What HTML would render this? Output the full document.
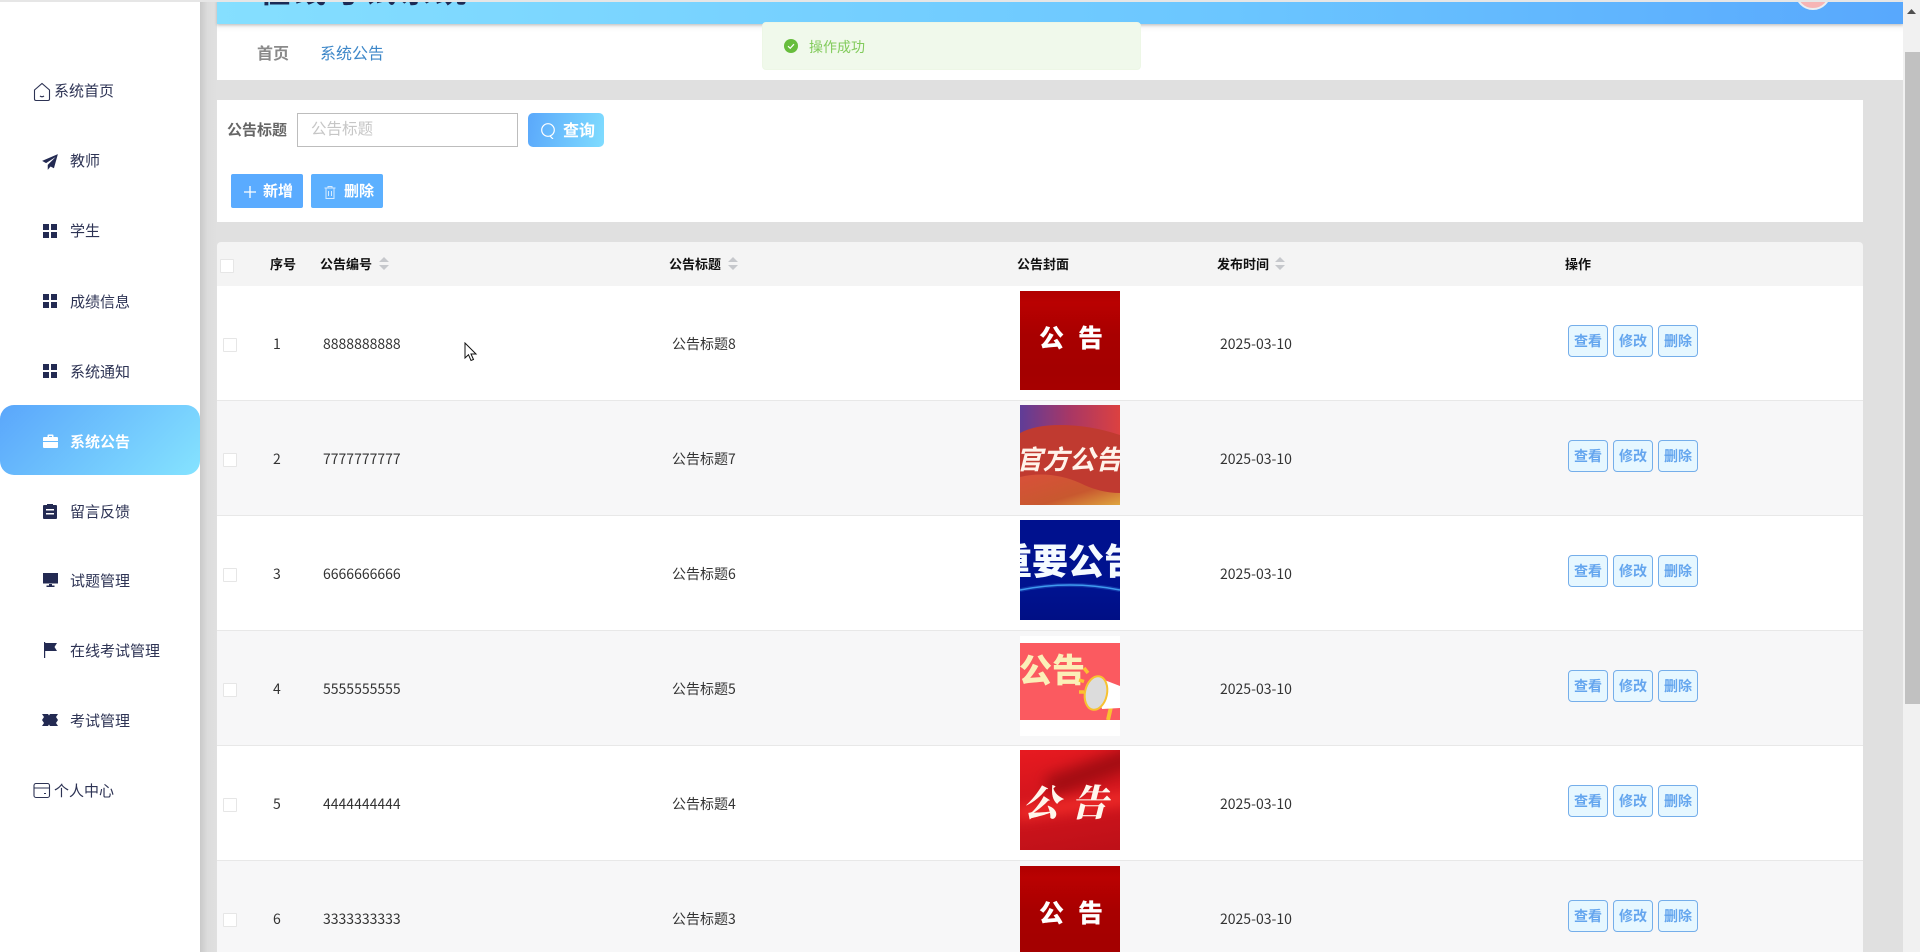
<!DOCTYPE html>
<html lang="zh-CN">
<head>
<meta charset="utf-8">
<title>系统公告</title>
<style>
*{box-sizing:border-box;margin:0;padding:0}
html,body{width:1920px;height:952px;overflow:hidden;background:#fff}
body{font-family:"Liberation Sans","Noto Sans CJK SC",sans-serif;position:relative}
.a{position:absolute;white-space:nowrap}
.cjk{font-family:"Noto Sans CJK SC","Liberation Sans",sans-serif}
.nav{position:absolute;left:70px;font:15px/20px "Noto Sans CJK SC",sans-serif;color:#2d3354;white-space:nowrap}
.ic{position:absolute}
.th{position:absolute;top:255px;font:bold 13px/18px "Noto Sans CJK SC",sans-serif;color:#111;white-space:nowrap}
.td{position:absolute;font:14px/20px "Noto Sans CJK SC",sans-serif;color:#333;white-space:nowrap}
.row{position:absolute;left:217px;width:1646px;height:115px;border-bottom:1px solid #e8e8e8}
.even{background:#f7f7f8}
.cb{position:absolute;left:223px;width:14px;height:14px;background:#fff;border:1px solid #e6e6e6;border-radius:1px}
.op{position:absolute;width:40px;height:32px;border:1px solid #75aeea;border-radius:4px;background:#e6f7ff;color:#64a5ee;font:bold 14px/31px "Noto Sans CJK SC",sans-serif;text-align:center}
.img{position:absolute;left:1020px;width:100px;height:100px;overflow:hidden}
.img span{position:absolute;white-space:nowrap;font-family:"Noto Sans CJK SC",sans-serif;font-weight:900}
.sort{position:absolute;width:10px;height:14px}
</style>
</head>
<body>

<!-- sidebar -->
<div class="a" style="left:0;top:0;width:1903px;height:2px;background:#e6e6e6;z-index:5"></div>
<div class="a" style="left:200px;top:0;width:17px;height:952px;background:linear-gradient(90deg,#c9c9c9,#dcdcdc 45%,#e0e0e0)"></div>
<div class="a" style="left:0;top:405px;width:200px;height:70px;border-radius:14px;background:linear-gradient(135deg,#5aa6fb,#85e3ff)"></div>

<svg class="ic" style="left:33px;top:82px" width="18" height="20" viewBox="0 0 18 20" fill="none" stroke="#2d3354" stroke-width="1.1"><path d="M1.5 8 9 1.5 16.5 8v9a1.5 1.5 0 0 1-1.500 1.500h-12A1.500 1.500 0 0 1 1.500 17z"/><path d="M7 14q2 1.500 4 0"/></svg>
<div class="nav" style="left:54px;top:81px">系统首页</div>

<svg class="ic" style="left:41px;top:153px" width="18" height="18" viewBox="0 0 16 16"><path fill="#232a52" d="M15 1 1 7l3.500 2L13 3.500 6 10.500V15l2.500-3 3 1.500z"/></svg>
<div class="nav" style="top:151px">教师</div>

<svg class="ic" style="left:43px;top:224px" width="14" height="14"><path fill="#232a52" d="M0 0h6v6H0zM8 0h6v6H8zM0 8h6v6H0zM8 8h6v6H8z"/></svg>
<div class="nav" style="top:221px">学生</div>

<svg class="ic" style="left:43px;top:294px" width="14" height="14"><path fill="#232a52" d="M0 0h6v6H0zM8 0h6v6H8zM0 8h6v6H0zM8 8h6v6H8z"/></svg>
<div class="nav" style="top:292px">成绩信息</div>

<svg class="ic" style="left:43px;top:364px" width="14" height="14"><path fill="#232a52" d="M0 0h6v6H0zM8 0h6v6H8zM0 8h6v6H0zM8 8h6v6H8z"/></svg>
<div class="nav" style="top:362px">系统通知</div>

<svg class="ic" style="left:43px;top:434px" width="15" height="14" viewBox="0 0 15 14"><path fill="#fff" d="M4.500 3V1.500A1 1 0 0 1 5.500.5h4a1 1 0 0 1 1 1V3H14a1 1 0 0 1 1 1v3H0V4a1 1 0 0 1 1-1zM6 3h3V2H6zM0 8h15v5a1 1 0 0 1-1 1H1a1 1 0 0 1-1-1z"/></svg>
<div class="nav" style="top:432px;color:#fff;font-weight:700">系统公告</div>

<svg class="ic" style="left:43px;top:503px" width="14" height="16" viewBox="0 0 14 16"><path fill="#232a52" fill-rule="evenodd" d="M4 1h6v1h3a1 1 0 0 1 1 1v12a1 1 0 0 1-1 1H1a1 1 0 0 1-1-1V3a1 1 0 0 1 1-1h3zM3 6v1.500h8V6zM3 10v1.500h8V10z"/></svg>
<div class="nav" style="top:502px">留言反馈</div>

<svg class="ic" style="left:43px;top:573px" width="15" height="14" viewBox="0 0 15 14"><path fill="#232a52" d="M0 0h15v10.500H0zM6 11h3v1.500h2.500V14h-8v-1.500H6z"/></svg>
<div class="nav" style="top:571px">试题管理</div>

<svg class="ic" style="left:44px;top:642px" width="14" height="16" viewBox="0 0 14 16"><path fill="#232a52" d="M0 0h1.200v16H0zM1.200 1H13l-2.500 4L13 9H1.200z"/></svg>
<div class="nav" style="top:641px">在线考试管理</div>

<svg class="ic" style="left:42px;top:714px" width="16" height="12" viewBox="0 0 16 12"><path fill="#232a52" d="M0 0h6l1 1.500L8 0h8l-2 3 2 3-2 3 2 3H8l-1-1.500L6 12H0l2-3L0 6l2-3z"/></svg>
<div class="nav" style="top:711px">考试管理</div>

<svg class="ic" style="left:33px;top:782px" width="18" height="17" viewBox="0 0 18 17" fill="none" stroke="#2d3354" stroke-width="1.100"><rect x="1" y="1.500" width="15.500" height="14" rx="2"/><path d="M1 6h15.500M11 11.500h2"/></svg>
<div class="nav" style="left:54px;top:781px">个人中心</div>

<!-- main background -->
<div class="a" style="left:217px;top:0;width:1686px;height:952px;background:#e0e0e0"></div>

<!-- header -->
<div class="a" style="left:217px;top:24px;width:1686px;height:56px;background:#fff"></div>
<div class="a" style="left:217px;top:24px;width:1686px;height:8px;background:linear-gradient(#ececec,#fbfbfb 60%,#fff)"></div>
<div class="a" style="left:217px;top:0;width:1686px;height:24px;background:linear-gradient(90deg,#85dfff,#6bc6ff 60%,#58a8fd);overflow:hidden;box-shadow:0 1px 3px rgba(0,0,0,.2)">
  <div class="a cjk" style="left:42px;top:-31px;font-size:32px;line-height:40px;font-weight:700;letter-spacing:3.200px;color:#1b2a55">在线考试系统</div>
  <div class="a" style="left:1578px;top:-26px;width:36px;height:36px;border-radius:50%;background:#f6b5b5;border:2px solid #e9eef2"></div>
</div>

<div class="a cjk" style="left:257px;top:41px;font-size:16px;line-height:22px;font-weight:700;color:#8a8a8a">首页</div>
<div class="a cjk" style="left:320px;top:41px;font-size:16px;line-height:22px;color:#3d87c8">系统公告</div>

<!-- search panel -->
<div class="a" style="left:217px;top:100px;width:1646px;height:122px;background:#fff"></div>
<div class="a cjk" style="left:227px;top:120px;font-size:15px;line-height:20px;font-weight:700;color:#666">公告标题</div>
<div class="a" style="left:297px;top:113px;width:221px;height:34px;border:1px solid #bdbdbd;background:#fff"></div>
<div class="a cjk" style="left:311px;top:117px;font-size:15.500px;line-height:22px;color:#c6c6c6">公告标题</div>
<div class="a" style="left:528px;top:113px;width:76px;height:34px;border-radius:5px;background:linear-gradient(100deg,#5aa8fb,#7fdcff)"></div>
<svg class="ic" style="left:540px;top:122px" width="16" height="17" viewBox="0 0 16 17" fill="none" stroke="#fff" stroke-width="1.200"><circle cx="8" cy="8" r="6.300"/><path d="M10 14l3 3"/></svg>
<div class="a cjk" style="left:563px;top:118px;font-size:16px;line-height:22px;font-weight:700;color:#fff">查询</div>

<div class="a" style="left:231px;top:174px;width:72px;height:34px;border-radius:2px;background:#5aabff"></div>
<svg class="ic" style="left:243px;top:185px" width="14" height="14" stroke="#fff" stroke-width="1.300"><path d="M7 1v12M1 7h12"/></svg>
<div class="a cjk" style="left:263px;top:180px;font-size:15px;line-height:22px;font-weight:700;color:#fff">新增</div>
<div class="a" style="left:311px;top:174px;width:72px;height:34px;border-radius:2px;background:#5cb0ff"></div>
<svg class="ic" style="left:323px;top:185px;opacity:.75" width="14" height="15" viewBox="0 0 14 15" fill="none" stroke="#fff" stroke-width="1"><path d="M1.500 3h11M5 3V1.500h4V3M3 3v10.500h8V3M5.500 6v5M8.500 6v5"/></svg>
<div class="a cjk" style="left:344px;top:180px;font-size:15px;line-height:22px;font-weight:700;color:#fff">删除</div>

<!-- table head -->
<div class="a" style="left:217px;top:242px;width:1646px;height:44px;background:#f4f4f4;border-radius:4px 4px 0 0"></div>
<div class="cb" style="left:220px;top:259px"></div>
<div class="th" style="left:270px">序号</div>
<div class="th" style="left:320px">公告编号</div>
<svg class="sort" style="left:379px;top:257px" viewBox="0 0 10 14"><path fill="#c6c8cc" d="M5 0l5 5H0zM0 8h10l-5 5z"/></svg>
<div class="th" style="left:669px">公告标题</div>
<svg class="sort" style="left:728px;top:257px" viewBox="0 0 10 14"><path fill="#c6c8cc" d="M5 0l5 5H0zM0 8h10l-5 5z"/></svg>
<div class="th" style="left:1017px">公告封面</div>
<div class="th" style="left:1217px">发布时间</div>
<svg class="sort" style="left:1275px;top:257px" viewBox="0 0 10 14"><path fill="#c6c8cc" d="M5 0l5 5H0zM0 8h10l-5 5z"/></svg>
<div class="th" style="left:1565px">操作</div>

<!-- rows -->
<div class="row" style="top:286px;background:#fff"></div>
<div class="row even" style="top:401px"></div>
<div class="row" style="top:516px;background:#fff"></div>
<div class="row even" style="top:631px"></div>
<div class="row" style="top:746px;background:#fff"></div>
<div class="row even" style="top:861px;height:91px;border:0"></div>

<div class="cb" style="top:338px"></div>
<div class="td" style="left:273px;top:334px">1</div>
<div class="td" style="left:323px;top:334px">8888888888</div>
<div class="td" style="left:672px;top:334px">公告标题8</div>
<div class="td" style="left:1220px;top:334px">2025-03-10</div>
<div class="op" style="left:1568px;top:325px">查看</div><div class="op" style="left:1613px;top:325px">修改</div><div class="op" style="left:1658px;top:325px">删除</div>

<div class="cb" style="top:453px"></div>
<div class="td" style="left:273px;top:449px">2</div>
<div class="td" style="left:323px;top:449px">7777777777</div>
<div class="td" style="left:672px;top:449px">公告标题7</div>
<div class="td" style="left:1220px;top:449px">2025-03-10</div>
<div class="op" style="left:1568px;top:440px">查看</div><div class="op" style="left:1613px;top:440px">修改</div><div class="op" style="left:1658px;top:440px">删除</div>

<div class="cb" style="top:568px"></div>
<div class="td" style="left:273px;top:564px">3</div>
<div class="td" style="left:323px;top:564px">6666666666</div>
<div class="td" style="left:672px;top:564px">公告标题6</div>
<div class="td" style="left:1220px;top:564px">2025-03-10</div>
<div class="op" style="left:1568px;top:555px">查看</div><div class="op" style="left:1613px;top:555px">修改</div><div class="op" style="left:1658px;top:555px">删除</div>

<div class="cb" style="top:683px"></div>
<div class="td" style="left:273px;top:679px">4</div>
<div class="td" style="left:323px;top:679px">5555555555</div>
<div class="td" style="left:672px;top:679px">公告标题5</div>
<div class="td" style="left:1220px;top:679px">2025-03-10</div>
<div class="op" style="left:1568px;top:670px">查看</div><div class="op" style="left:1613px;top:670px">修改</div><div class="op" style="left:1658px;top:670px">删除</div>

<div class="cb" style="top:798px"></div>
<div class="td" style="left:273px;top:794px">5</div>
<div class="td" style="left:323px;top:794px">4444444444</div>
<div class="td" style="left:672px;top:794px">公告标题4</div>
<div class="td" style="left:1220px;top:794px">2025-03-10</div>
<div class="op" style="left:1568px;top:785px">查看</div><div class="op" style="left:1613px;top:785px">修改</div><div class="op" style="left:1658px;top:785px">删除</div>

<div class="cb" style="top:913px"></div>
<div class="td" style="left:273px;top:909px">6</div>
<div class="td" style="left:323px;top:909px">3333333333</div>
<div class="td" style="left:672px;top:909px">公告标题3</div>
<div class="td" style="left:1220px;top:909px">2025-03-10</div>
<div class="op" style="left:1568px;top:900px">查看</div><div class="op" style="left:1613px;top:900px">修改</div><div class="op" style="left:1658px;top:900px">删除</div>

<!-- images -->
<div class="img" style="top:291px;height:99px;background:linear-gradient(180deg,#b00000,#b90101 12%,#a80000 45%,#a40000 80%,#a60000)">
  <span style="left:19px;top:26px;font-size:25px;line-height:40px;letter-spacing:14px;color:#fff">公告</span>
</div>
<div class="img" style="top:405px;background:#c2382f">
  <svg style="position:absolute;left:0;top:0" width="100" height="100" viewBox="0 0 100 100">
    <defs>
      <linearGradient id="g1" x1="0" x2="1" y1="0" y2="0"><stop offset="0" stop-color="#5f3d98"/><stop offset=".5" stop-color="#a83765"/><stop offset="1" stop-color="#dc4140"/></linearGradient>
      <linearGradient id="g2" x1="0" x2="1" y1="0" y2="1"><stop offset="0" stop-color="#d9503a"/><stop offset=".6" stop-color="#c8582f"/><stop offset="1" stop-color="#dfa63f"/></linearGradient>
    </defs>
    <rect width="100" height="100" fill="#c03a30"/>
    <path fill="url(#g1)" d="M0 0h100v30Q70 20 40 20 15 20 0 28z"/>
    <path fill="url(#g2)" d="M0 72Q30 65 60 78 80 88 100 88V100H0z"/>
  </svg>
  <span style="left:-4px;top:33px;font-size:26.500px;line-height:40px;font-style:italic;font-weight:700;color:#fff3ea">官方公告</span>
</div>
<div class="img" style="top:520px;background:linear-gradient(#00118e,#00128f 70%,#000f85)">
  <svg style="position:absolute;left:0;top:0" width="100" height="100" viewBox="0 0 100 100"><path d="M0 70Q50 60 100 70" fill="none" stroke="#3f9bef" stroke-width="1.500"/><path d="M0 70Q50 60 100 70" fill="none" stroke="#3f9bef" stroke-width="4" opacity=".25"/></svg>
  <span style="left:-24px;top:14px;font-size:36px;line-height:50px;color:#f5fbff">重要公告</span>
</div>
<div class="img" style="top:636px;background:#fff">
  <div style="position:absolute;left:0;top:7px;width:100px;height:77px;background:#fb5a60"></div>
  <span style="left:-1px;top:12px;font-size:33px;line-height:40px;color:#fbefb8">公告</span>
  <svg style="position:absolute;left:0;top:0" width="100" height="84" viewBox="0 0 100 84">
    <path stroke="#f7c230" stroke-width="4" fill="none" d="M93 62 88 84"/>
    <path fill="#fff" d="M74 40 100 50V72L82 73z"/>
    <ellipse cx="76" cy="57" rx="11" ry="17" fill="#dcdcdc" stroke="#f7c230" stroke-width="2" transform="rotate(12 76 57)"/>
    <path stroke="#fcc132" stroke-width="3.500" d="M64 32l4 5M59 44l5 1.500M59 56h5"/>
  </svg>
</div>
<div class="img" style="top:750px;background:linear-gradient(170deg,#e71a20,#d0141c 50%,#bd1018)">
  <div style="position:absolute;left:25px;top:10px;width:100px;height:22px;background:#a20c12;transform:rotate(-20deg);filter:blur(7px)"></div>
  <div style="position:absolute;left:-5px;top:48px;width:120px;height:14px;background:#ee2a28;transform:rotate(-8deg);filter:blur(6px)"></div>
  <span style="left:3px;top:25px;font-family:'Noto Serif CJK SC',serif;font-size:37px;line-height:50px;letter-spacing:11px;font-style:italic;color:#fff6ec">公告</span>
</div>
<div class="img" style="top:866px;background:linear-gradient(180deg,#b00000,#b90101 12%,#a80000 45%,#a40000 80%,#a60000)">
  <span style="left:19px;top:26px;font-size:25px;line-height:40px;letter-spacing:14px;color:#fff">公告</span>
</div>

<!-- toast -->
<div class="a" style="left:762px;top:22px;width:379px;height:48px;background:#f0f9eb;border:1px solid #edf7e6;border-radius:4px;z-index:6"></div>
<svg class="ic" style="left:784px;top:39px;z-index:7" width="14" height="14" viewBox="0 0 14 14"><circle cx="7" cy="7" r="7" fill="#67bd3c"/><path d="M4 7.200 6.200 9.300 10 5.200" fill="none" stroke="#fff" stroke-width="1.200"/></svg>
<div class="a cjk" style="left:809px;top:37px;font-size:14px;line-height:20px;color:#82cb5c;z-index:7">操作成功</div>

<!-- scrollbar -->
<div class="a" style="left:1903px;top:0;width:17px;height:952px;background:#f1f1f1"></div>
<div class="a" style="left:1905px;top:52px;width:15px;height:652px;background:#c1c1c1"></div>
<svg class="ic" style="left:1907px;top:9px" width="9" height="6"><path fill="#505050" d="M4.500 0 9 5H0z"/></svg>

<!-- cursor -->
<svg class="ic" style="left:464px;top:342px;z-index:8" width="14" height="21" viewBox="0 0 14 21"><path fill="#fff" stroke="#111" stroke-width="1" d="M1 1v15l3.500-3.300L7 18.500l2.500-1-2.500-5.500h5z"/></svg>

</body>
</html>
